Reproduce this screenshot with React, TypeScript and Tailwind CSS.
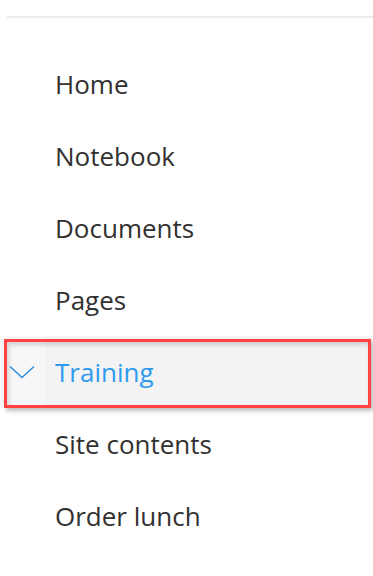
const items = ['Home', 'Notebook', 'Documents', 'Pages', 'Training', 'Site contents', 'Order lunch'];

export default function App() {
  return (
    <div className="w-[373px] h-[576px] bg-white overflow-hidden" style={{ fontFamily: '"Open Sans", "Noto Sans", sans-serif' }}>
      <div className="pt-4 pl-[7px]">
        <div className="h-[2px] bg-[#ebebeb]" />
      </div>

      <nav className="mt-[30px]">
        {items.map(item =>
          item === 'Training' ? (
            <div key={item} className="relative flex h-[72px] items-center bg-[#f3f3f3]">
              <div className="flex h-full w-[45px] items-center justify-center bg-[#f7f7f7]">
                <svg width="26" height="14" viewBox="0 0 26 14" fill="none" className="ml-[-2px]">
                  <path d="M1 1.5 L13 12.5 L25 1.5" stroke="#2b8fe0" strokeWidth="1.5" />
                </svg>
              </div>
              <span className="pl-[10px] text-[26px] text-[#2e9bef]">{item}</span>
              {/* annotation box */}
              <div className="absolute left-[4px] top-[3px] h-[69px] w-[367px] border-[3px] border-[#ff4242] shadow-[2px_3px_4px_rgba(0,0,0,0.25),inset_2px_3px_4px_rgba(0,0,0,0.15)]" />
            </div>
          ) : (
            <div key={item} className="flex h-[72px] items-center pl-[55px]">
              <span className="text-[26px] text-[#323130]">{item}</span>
            </div>
          )
        )}
      </nav>
    </div>
  );
}
